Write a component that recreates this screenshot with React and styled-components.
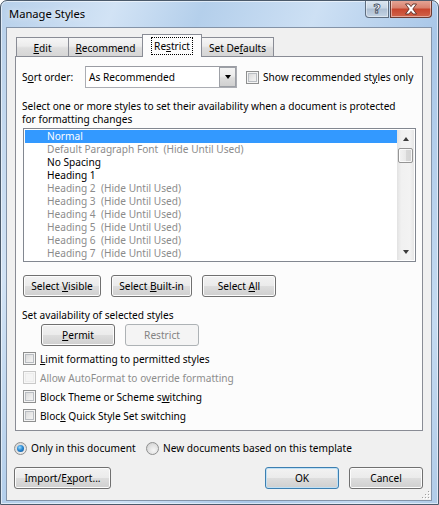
import React from 'react';
import styled, { createGlobalStyle } from 'styled-components';

const GlobalStyle = createGlobalStyle`
  html, body {
    margin: 0;
    padding: 0;
    background: #ffffff;
  }
  body {
    font-family: "Noto Sans", "Open Sans", sans-serif;
    font-size: 10.15px;
    color: #000;
  }
  * {
    box-sizing: border-box;
  }
`;

const Window = styled.div`
  width: 439px;
  height: 505px;
  border: 1px solid #4b5a6b;
  border-radius: 7px 7px 0 0;
  background: linear-gradient(
    112deg,
    #b7d0ea 0%,
    #d2e3f5 18%,
    #b4cfeb 32%,
    #cde0f4 50%,
    #a9c7e8 70%,
    #c4daf1 88%,
    #b0cbe8 100%
  );
  box-shadow: inset 0 0 0 1px rgba(255, 255, 255, 0.55);
  display: flex;
  flex-direction: column;
  overflow: hidden;
`;

const TitleBar = styled.div`
  height: 26px;
  display: flex;
  align-items: flex-start;
  padding: 0 6px 0 8px;
`;

const Title = styled.div`
  flex: 1;
  line-height: 26px;
  font-size: 11.2px;
  color: #000;
  text-shadow: 0 0 6px rgba(255, 255, 255, 0.9);
`;

const CaptionButtons = styled.div`
  display: flex;
  gap: 1px;
  margin-top: -1px;
`;

const CaptionButton = styled.div`
  width: ${(p) => p.$w}px;
  height: 18px;
  border: 1px solid ${(p) => (p.$close ? '#6b3b33' : '#5f6e80')};
  border-top: none;
  border-radius: ${(p) => (p.$close ? '0 0 4px 0' : '0 0 0 4px')};
  background: ${(p) =>
    p.$close
      ? 'linear-gradient(#e6a899 0%, #d9826f 45%, #c8462e 55%, #d0634a 100%)'
      : 'linear-gradient(#dfe8f2 0%, #c8d6e5 45%, #aebfd3 55%, #c5d4e4 100%)'};
  box-shadow: inset 0 0 0 1px rgba(255, 255, 255, 0.45);
  display: flex;
  align-items: center;
  justify-content: center;
`;

const HelpGlyph = styled.span`
  font-family: "DejaVu Sans", sans-serif;
  font-weight: bold;
  font-size: 13px;
  line-height: 1;
  color: #fff;
  -webkit-text-stroke: 0.8px #3d4b5c;
  margin-top: -1px;
`;

const Client = styled.div`
  flex: 1;
  margin: 0 6px 3px 5px;
  border: 1px solid #8393a8;
  background: #f0f0f0;
  display: flex;
  flex-direction: column;
  padding: 6px 8px 0 7px;
  position: relative;
`;

const TabStrip = styled.div`
  display: flex;
  align-items: flex-end;
  height: 22px;
  margin-left: 1px;
  padding-left: 1px;
  position: relative;
  z-index: 1;
`;

const Tab = styled.div`
  width: ${(p) => p.$w}px;
  height: ${(p) => (p.$active ? 23 : 19)}px;
  margin-left: ${(p) => (p.$first ? 0 : -1)}px;
  margin-bottom: ${(p) => (p.$active ? -1 : 0)}px;
  border: 1px solid #898c95;
  border-bottom: none;
  background: ${(p) =>
    p.$active ? '#fcfcfc' : 'linear-gradient(#f6f6f6 0%, #ececec 45%, #dedede 55%, #d6d6d6 100%)'};
  display: flex;
  align-items: center;
  justify-content: center;
  padding-top: ${(p) => (p.$active ? 0 : 2)}px;
  position: relative;
  z-index: ${(p) => (p.$active ? 2 : 1)};
`;

const FocusText = styled.span`
  outline: 1px dotted #000;
  outline-offset: 0;
  padding: 1px 2px;
`;

const Panel = styled.div`
  margin-left: 1px;
  height: 375px;
  border: 1px solid #898c95;
  background: #fcfcfc;
  display: flex;
  flex-direction: column;
  padding: 0 7px 0 6px;
`;

const SortRow = styled.div`
  margin-top: 9px;
  height: 22px;
  display: flex;
  align-items: center;
`;

const FieldLabel = styled.div`
  width: 63px;
`;

const Combo = styled.div`
  width: 152px;
  height: 22px;
  border: 1px solid #abadb3;
  border-top-color: #9a9ca3;
  background: #fff;
  display: flex;
  align-items: center;
  padding-left: 3px;
`;

const ComboText = styled.div`
  flex: 1;
`;

const DropButton = styled.div`
  width: 17px;
  height: 100%;
  border: 1px solid #9da0a6;
  background: linear-gradient(#f4f4f4 0%, #ececec 45%, #dddddd 55%, #d0d0d0 100%);
  display: flex;
  align-items: center;
  justify-content: center;
`;

const DownTriangle = styled.span`
  width: 0;
  height: 0;
  border-left: 3.5px solid transparent;
  border-right: 3.5px solid transparent;
  border-top: 4px solid #000;
`;

const CheckItem = styled.label`
  display: flex;
  align-items: center;
  gap: 4px;
  height: ${(p) => (p.$h ? `${p.$h}px` : 'auto')};
  margin-left: ${(p) => p.$ml || 0}px;
  white-space: nowrap;
  color: ${(p) => (p.$disabled ? '#8d8d8d' : '#000')};
`;

const Box = styled.span`
  width: 13px;
  height: 13px;
  flex: none;
  border: 1px solid ${(p) => (p.$disabled ? '#c9c9c9' : '#8e8f8f')};
  background: ${(p) =>
    p.$disabled ? '#f4f4f4' : 'linear-gradient(135deg, #d3d3d3 0%, #ececec 60%, #f7f7f7 100%)'};
  box-shadow: inset 0 0 0 1px ${(p) => (p.$disabled ? '#f7f7f7' : '#f4f4f4')},
    inset 0 0 0 2px ${(p) => (p.$disabled ? '#ececec' : '#b9bdc2')};
`;

const Para = styled.div`
  margin-top: ${(p) => p.$mt || 0}px;
  line-height: 13px;
  white-space: nowrap;
`;

const ListBox = styled.div`
  margin-top: 2px;
  margin-left: 1px;
  width: 393px;
  height: 134px;
  border: 1px solid #828790;
  background: #fff;
  padding: 1px;
  display: flex;
  overflow: hidden;
`;

const Items = styled.div`
  flex: 1;
  display: flex;
  flex-direction: column;
`;

const Item = styled.div`
  height: 13px;
  flex: none;
  line-height: 13px;
  padding-left: 22px;
  white-space: pre;
  background: ${(p) => (p.$selected ? '#3399ff' : 'transparent')};
  color: ${(p) => (p.$selected ? '#fff' : p.$hidden ? '#8c8c8c' : '#000')};
`;

const ScrollBar = styled.div`
  width: 17px;
  display: flex;
  flex-direction: column;
  background: linear-gradient(90deg, #e2e2e2 0%, #f1f1f1 25%, #f3f3f3 75%, #e6e6e6 100%);
`;

const ArrowCell = styled.div`
  height: 17px;
  flex: none;
  display: flex;
  align-items: center;
  justify-content: center;
`;

const Arrow = styled.span`
  width: 0;
  height: 0;
  border-left: 3.5px solid transparent;
  border-right: 3.5px solid transparent;
  ${(p) => (p.$up ? 'border-bottom: 4px solid #3c3c3c;' : 'border-top: 4px solid #3c3c3c;')}
`;

const Thumb = styled.div`
  height: 15px;
  margin: 1px 1px 0;
  flex: none;
  border: 1px solid #959595;
  border-radius: 2px;
  background: linear-gradient(90deg, #f3f3f3 0%, #e9e9e9 50%, #d8d8d8 55%, #d3d3d3 100%);
  box-shadow: inset 0 0 0 1px rgba(255, 255, 255, 0.8);
`;

const Track = styled.div`
  flex: 1;
`;

const ButtonRow = styled.div`
  display: flex;
  gap: 10px;
  margin-top: ${(p) => p.$mt || 0}px;
  margin-left: ${(p) => p.$ml || 0}px;
`;

const Button = styled.div`
  width: ${(p) => p.$w}px;
  height: 22px;
  flex: none;
  border: 1px solid ${(p) => (p.$disabled ? '#adb2b5' : p.$default ? '#3c7fb1' : '#707070')};
  border-radius: 3px;
  background: ${(p) =>
    p.$disabled
      ? '#f4f4f4'
      : 'linear-gradient(#f2f2f2 0%, #ebebeb 48%, #dddddd 52%, #cfcfcf 100%)'};
  box-shadow: inset 0 0 0 1px ${(p) => (p.$disabled ? '#f4f4f4' : p.$default ? '#bfe0f5' : '#fcfcfc')};
  color: ${(p) => (p.$disabled ? '#838383' : '#000')};
  white-space: nowrap;
  display: flex;
  align-items: center;
  justify-content: center;
`;

const Spacer = styled.div`
  flex: 1;
`;

const ChecksList = styled.div`
  margin-top: 3px;
  display: flex;
  flex-direction: column;
`;

const RadioRow = styled.div`
  margin-top: 9px;
  height: 16px;
  display: flex;
  align-items: center;
`;

const RadioItem = styled.label`
  display: flex;
  align-items: center;
  gap: 4px;
  white-space: nowrap;
  width: ${(p) => (p.$w ? `${p.$w}px` : 'auto')};
`;

const Radio = styled.span`
  width: 13px;
  height: 13px;
  flex: none;
  border-radius: 50%;
  border: 1px solid #8e8f8f;
  background: radial-gradient(circle at 60% 65%, #f6f6f6 0%, #e2e2e2 50%, #c9c9c9 100%);
  display: flex;
  align-items: center;
  justify-content: center;
`;

const RadioDot = styled.span`
  width: 7px;
  height: 7px;
  border-radius: 50%;
  background: radial-gradient(circle at 40% 35%, #9adcff 0%, #2a8ad4 45%, #0c4a8c 100%);
`;

const Footer = styled.div`
  margin-top: 11px;
  display: flex;
  gap: 10px;
`;

const Grip = styled.svg`
  position: absolute;
  right: 1px;
  bottom: 1px;
`;

const U = styled.span`
  text-decoration: underline;
  text-underline-offset: 1px;
`;

const styleNames = [
  { name: 'Normal', selected: true },
  { name: 'Default Paragraph Font  (Hide Until Used)', hidden: true },
  { name: 'No Spacing' },
  { name: 'Heading 1' },
  { name: 'Heading 2  (Hide Until Used)', hidden: true },
  { name: 'Heading 3  (Hide Until Used)', hidden: true },
  { name: 'Heading 4  (Hide Until Used)', hidden: true },
  { name: 'Heading 5  (Hide Until Used)', hidden: true },
  { name: 'Heading 6  (Hide Until Used)', hidden: true },
  { name: 'Heading 7  (Hide Until Used)', hidden: true },
];

const App = () => {
  return (
    <>
      <GlobalStyle />
      <Window>
        <TitleBar>
          <Title>Manage Styles</Title>
          <CaptionButtons>
            <CaptionButton $w={24}>
              <HelpGlyph>?</HelpGlyph>
            </CaptionButton>
            <CaptionButton $w={42} $close>
              <svg width="14" height="12" viewBox="0 0 14 12">
                <path
                  d="M1.5 1 H5 L7 3.6 L9 1 H12.5 L8.8 6 L12.5 11 H9 L7 8.4 L5 11 H1.5 L5.2 6 Z"
                  fill="#fff"
                  stroke="#5a2a22"
                  strokeWidth="0.9"
                  strokeLinejoin="round"
                />
              </svg>
            </CaptionButton>
          </CaptionButtons>
        </TitleBar>

        <Client>
          <TabStrip>
            <Tab $w={53} $first>
              <span><U>E</U>dit</span>
            </Tab>
            <Tab $w={75}>
              <span><U>R</U>ecommend</span>
            </Tab>
            <Tab $w={60} $active>
              <FocusText>Re<U>s</U>trict</FocusText>
            </Tab>
            <Tab $w={73}>
              <span>Set De<U>f</U>aults</span>
            </Tab>
          </TabStrip>

          <Panel>
            <SortRow>
              <FieldLabel>S<U>o</U>rt order:</FieldLabel>
              <Combo>
                <ComboText>As Recommended</ComboText>
                <DropButton>
                  <DownTriangle />
                </DropButton>
              </Combo>
              <CheckItem $ml={9}>
                <Box />
                <span>Show recommended st<U>y</U>les only</span>
              </CheckItem>
            </SortRow>

            <Para $mt={12}>
              Select one or more styles to set their availability when a document is protected
              <br />
              for formatting changes
            </Para>

            <ListBox>
              <Items>
                {styleNames.map((s) => (
                  <Item key={s.name} $selected={s.selected} $hidden={s.hidden}>
                    {s.name}
                  </Item>
                ))}
              </Items>
              <ScrollBar>
                <ArrowCell>
                  <Arrow $up />
                </ArrowCell>
                <Thumb />
                <Track />
                <ArrowCell>
                  <Arrow />
                </ArrowCell>
              </ScrollBar>
            </ListBox>

            <ButtonRow $mt={13} $ml={1}>
              <Button $w={78}>
                <span>Select <U>V</U>isible</span>
              </Button>
              <Button $w={81}>
                <span>Select <U>B</U>uilt-in</span>
              </Button>
              <Button $w={74}>
                <span>Select <U>A</U>ll</span>
              </Button>
            </ButtonRow>

            <Para $mt={12}>Set availability of selected styles</Para>

            <ButtonRow $mt={2} $ml={19}>
              <Button $w={74}>
                <span><U>P</U>ermit</span>
              </Button>
              <Button $w={74} $disabled>
                Restrict
              </Button>
            </ButtonRow>

            <ChecksList>
              <CheckItem $h={19} $ml={1}>
                <Box />
                <span><U>L</U>imit formatting to permitted styles</span>
              </CheckItem>
              <CheckItem $h={19} $ml={1} $disabled>
                <Box $disabled />
                <span>Allow AutoFormat to override formatting</span>
              </CheckItem>
              <CheckItem $h={19} $ml={1}>
                <Box />
                <span>Block Theme or Scheme s<U>w</U>itching</span>
              </CheckItem>
              <CheckItem $h={19} $ml={1}>
                <Box />
                <span>Bloc<U>k</U> Quick Style Set switching</span>
              </CheckItem>
            </ChecksList>
          </Panel>

          <RadioRow>
            <RadioItem $w={132}>
              <Radio>
                <RadioDot />
              </Radio>
              <span>Only in this document</span>
            </RadioItem>
            <RadioItem>
              <Radio />
              <span>New documents based on this template</span>
            </RadioItem>
          </RadioRow>

          <Footer>
            <Button $w={97}>
              <span>Import/E<U>x</U>port...</span>
            </Button>
            <Spacer />
            <Button $w={74} $default>
              OK
            </Button>
            <Button $w={74}>Cancel</Button>
          </Footer>

          <Grip width="9" height="9" viewBox="0 0 9 9">
            <g fill="#a0a0a0">
              <rect x="7" y="1" width="1" height="1" />
              <rect x="4" y="4" width="1" height="1" />
              <rect x="7" y="4" width="1" height="1" />
              <rect x="1" y="7" width="1" height="1" />
              <rect x="4" y="7" width="1" height="1" />
              <rect x="7" y="7" width="1" height="1" />
            </g>
            <g fill="#ffffff">
              <rect x="8" y="2" width="1" height="1" />
              <rect x="5" y="5" width="1" height="1" />
              <rect x="8" y="5" width="1" height="1" />
              <rect x="2" y="8" width="1" height="1" />
              <rect x="5" y="8" width="1" height="1" />
              <rect x="8" y="8" width="1" height="1" />
            </g>
          </Grip>
        </Client>
      </Window>
    </>
  );
};

export default App;
